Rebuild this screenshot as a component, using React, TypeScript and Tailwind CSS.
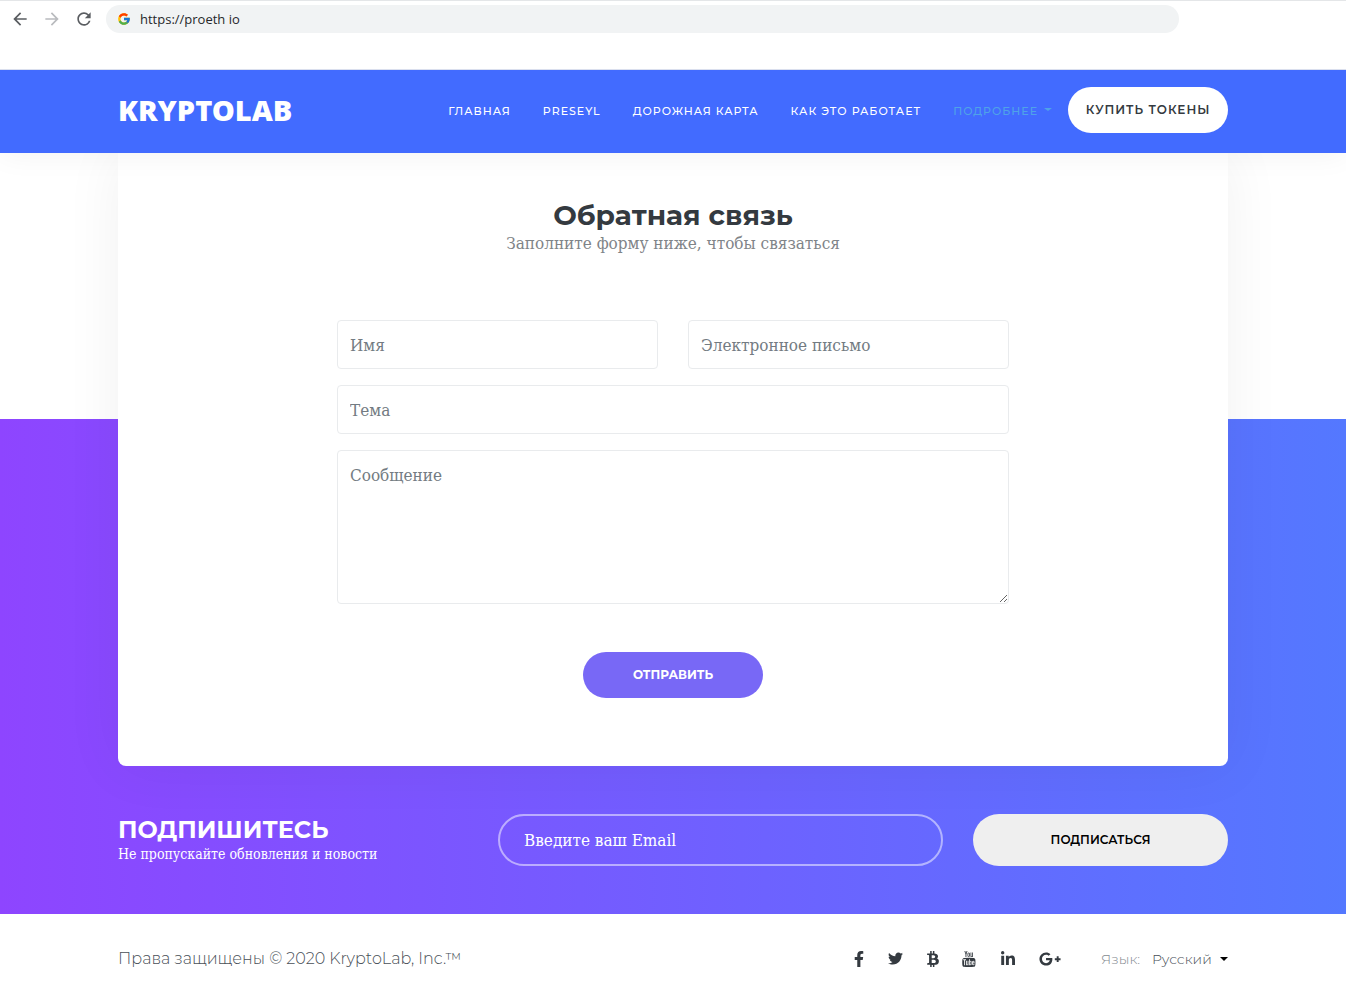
import { FaBtc, FaFacebookF, FaGooglePlusG, FaLinkedinIn, FaTwitter } from 'react-icons/fa';
import { FcGoogle } from 'react-icons/fc';
import { MdArrowBack, MdArrowForward, MdRefresh } from 'react-icons/md';

const navLinks = ['Главная', 'Preseyl', 'Дорожная карта', 'Как это работает'];

const fieldClass =
  "block w-full rounded-[4px] border border-[#e9ebed] bg-white px-3 font-['DejaVu_Serif_Condensed','DejaVu_Serif',serif] text-[17px] leading-6 text-[#495057] placeholder:text-[#737b82] placeholder:opacity-100 outline-none focus:border-[#7868f6]";

function YoutubeIcon() {
  return (
    <svg viewBox="0 0 1792 1792" className="size-4 shrink-0" fill="currentColor" aria-hidden="true">
      <path d="M971 1244v211q0 67-39 67-23 0-45-22v-301q22-22 45-22 39 0 39 67zm338 1v46h-90v-46q0-68 45-68t45 68zm-966-218h107v-94h-312v94h105v569h100v-569zm288 569h89v-494h-89v378q-30 42-57 42-18 0-21-21-1-3-1-35v-364h-89v391q0 49 8 73 12 37 58 37 48 0 102-61v54zm429-148v-197q0-73-9-99-17-56-71-56-50 0-93 54v-217h-89v663h89v-48q45 55 93 55 54 0 71-55 9-27 9-100zm338-10v-13h-91q0 51-2 61-7 36-40 36-46 0-46-69v-87h179v-103q0-79-27-116-39-51-106-51-68 0-107 51-28 37-28 116v173q0 79 29 116 39 51 108 51 72 0 108-53 18-27 21-54 2-9 2-58zm-608-913v-210q0-69-43-69t-43 69v210q0 70 43 70t43-70zm719 751q0 234-26 350-14 59-58 99t-102 46q-184 21-555 21t-555-21q-58-6-102.5-46t-57.5-99q-26-112-26-350 0-234 26-350 14-59 58-99t103-47q183-20 554-20t555 20q58 7 102.5 47t57.5 99q26 112 26 350zm-998-1276h102l-121 399v271h-100v-271q-14-74-61-212-37-103-65-187h106l71 263zm370 333v175q0 81-28 118-38 51-106 51-67 0-105-51-28-38-28-118v-175q0-80 28-117 38-51 105-51 68 0 106 51 28 37 28 117zm335-162v499h-91v-55q-53 62-103 62-46 0-59-37-8-24-8-75v-394h91v367q0 33 1 35 3 22 21 22 27 0 57-43v-381h91z" />
    </svg>
  );
}

const socials = [
  { label: 'Facebook', icon: <FaFacebookF className="size-4 shrink-0" />, box: 'w-[10px]' },
  { label: 'Twitter', icon: <FaTwitter className="size-[15px] shrink-0" />, box: 'w-[15px]' },
  { label: 'Bitcoin', icon: <FaBtc className="size-4 shrink-0" />, box: 'w-[12px]' },
  { label: 'YouTube', icon: <YoutubeIcon />, box: 'w-[14px]' },
  { label: 'LinkedIn', icon: <FaLinkedinIn className="size-4 shrink-0" />, box: 'w-[14px]' },
  { label: 'Google Plus', icon: <FaGooglePlusG className="size-[22px] shrink-0" />, box: 'w-[22px]' },
];

function BrowserBar() {
  return (
    <div className="relative z-20 flex h-[70px] items-start border-t border-b border-t-[#e4e6e8] border-b-[#dadfee] bg-white pt-1 pl-[10px]">
      <div className="flex h-7 items-center gap-3 text-[#5a5d61]">
        <button type="button" aria-label="Назад"><MdArrowBack className="size-5" /></button>
        <button type="button" aria-label="Вперёд" className="text-[#b9bbbe]"><MdArrowForward className="size-5" /></button>
        <button type="button" aria-label="Обновить"><MdRefresh className="size-5" /></button>
      </div>
      <label className="mr-[167px] ml-3 flex h-7 flex-1 items-center gap-[9px] rounded-full bg-[#f1f3f4] px-[11px]">
        <FcGoogle className="size-[14px]" />
        <input
          aria-label="Адрес"
          defaultValue="https://proeth io"
          className="min-w-0 flex-1 bg-transparent font-['Open_Sans',sans-serif] text-[13px] leading-5 text-[#26282b] outline-none"
        />
      </label>
    </div>
  );
}

function Header() {
  return (
    <header className="relative z-10 bg-[#426bff] shadow-[0_2px_30px_rgba(0,0,0,0.05)]">
      <div className="mx-auto flex h-[83px] max-w-[1140px] items-center justify-between px-[15px] pb-[3px]">
        <a href="#" className="font-['Noto_Sans','Open_Sans',sans-serif] text-[29px] leading-8 font-black text-white">KRYPTOLAB</a>
        <nav className="flex items-center gap-4 text-[11px] leading-5 font-medium tracking-[1px] text-white uppercase">
          <ul className="flex items-center gap-8 pt-[2px]">
            {navLinks.map((link) => (
              <li key={link}><a href="#">{link}</a></li>
            ))}
            <li>
              <button type="button" className="flex items-center gap-[6px] font-medium tracking-[1px] text-[#4fa3e8] uppercase">
                Подробнее
                <span className="mb-1 border-x-4 border-t-[3px] border-x-transparent border-t-current" />
              </button>
            </li>
          </ul>
          <a href="#" className="flex h-[46px] w-[160px] items-center justify-center rounded-full bg-white text-[12px] font-semibold text-[#343a40]">
            Купить токены
          </a>
        </nav>
      </div>
    </header>
  );
}

function ContactCard() {
  return (
    <div className="rounded-b-lg bg-white px-6 pt-[46px] pb-[68px] text-center shadow-[0_0_60px_rgba(0,0,0,0.06)]">
      <h2 className="text-[28px] leading-8 font-bold text-[#343a40]">Обратная связь</h2>
      <p className="font-['DejaVu_Serif_Condensed','DejaVu_Serif',serif] text-[17px] leading-6 font-light text-[#7f8488]">Заполните форму ниже, чтобы связаться</p>
      <form className="mx-auto mt-[65px] max-w-[672px]" onSubmit={(e) => e.preventDefault()}>
        <div className="grid grid-cols-2 gap-x-[30px] gap-y-4">
          <input aria-label="Имя" placeholder="Имя" className={`${fieldClass} h-[49px]`} />
          <input aria-label="Электронное письмо" type="email" placeholder="Электронное письмо" className={`${fieldClass} h-[49px]`} />
          <input aria-label="Тема" placeholder="Тема" className={`${fieldClass} col-span-2 h-[49px]`} />
          <textarea aria-label="Сообщение" placeholder="Сообщение" className={`${fieldClass} col-span-2 h-[154px] resize-y py-3`} />
        </div>
        <button type="submit" className="mt-12 h-[46px] w-[180px] rounded-full bg-[#7868f6] text-[12px] font-bold text-white uppercase">
          Отправить
        </button>
      </form>
    </div>
  );
}

function Subscribe() {
  return (
    <form className="grid grid-cols-[350fr_445fr_255fr] items-center gap-[30px] py-12" onSubmit={(e) => e.preventDefault()}>
      <div className="text-white">
        <h3 className="text-[24px] leading-7 font-bold">ПОДПИШИТЕСЬ</h3>
        <p className="font-['DejaVu_Serif_Condensed','DejaVu_Serif',serif] text-[14px] leading-5">Не пропускайте обновления и новости</p>
      </div>
      <input
        type="email"
        aria-label="Введите ваш Email"
        placeholder="Введите ваш Email"
        className="h-[52px] w-full rounded-full border-2 border-white/50 bg-transparent px-6 font-['DejaVu_Serif_Condensed','DejaVu_Serif',serif] text-[17px] text-white outline-none placeholder:text-white placeholder:opacity-100"
      />
      <button type="submit" className="h-[52px] rounded-full bg-[#efefef] text-[12px] font-semibold text-black uppercase">Подписаться</button>
    </form>
  );
}

function Footer() {
  return (
    <footer className="bg-white">
      <div className="mx-auto flex h-[74px] max-w-[1140px] items-center justify-between px-[15px] pt-[15px] text-[16px] leading-6 font-light text-[#495057]">
        <p>Права защищены © 2020 KryptoLab, Inc.™</p>
        <div className="flex items-center gap-10">
          <ul className="flex items-center gap-6 text-[#343a40]">
            {socials.map(({ label, icon, box }) => (
              <li key={label}>
                <a href="#" aria-label={label} className={`flex h-4 items-center justify-center ${box}`}>{icon}</a>
              </li>
            ))}
          </ul>
          <label className="flex items-center text-[14px]">
            <span className="mr-3 text-[#868c92]">Язык:</span>
            <select defaultValue="ru" className="mr-2 appearance-none bg-transparent font-light outline-none">
              <option value="ru">Русский</option>
            </select>
            <span className="block h-0 w-0 border-x-4 border-t-4 border-x-transparent border-t-black" aria-hidden="true" />
          </label>
        </div>
      </div>
    </footer>
  );
}

export default function App() {
  return (
    <div className="min-h-screen bg-white font-['Montserrat','Inter',sans-serif]">
      <BrowserBar />
      <Header />
      <main className="bg-[linear-gradient(white,white),linear-gradient(90deg,#8e45ff,#5478ff)] bg-[length:100%_266px,100%_100%] bg-no-repeat">
        <div className="mx-auto max-w-[1140px] px-[15px]">
          <ContactCard />
          <Subscribe />
        </div>
      </main>
      <Footer />
    </div>
  );
}
